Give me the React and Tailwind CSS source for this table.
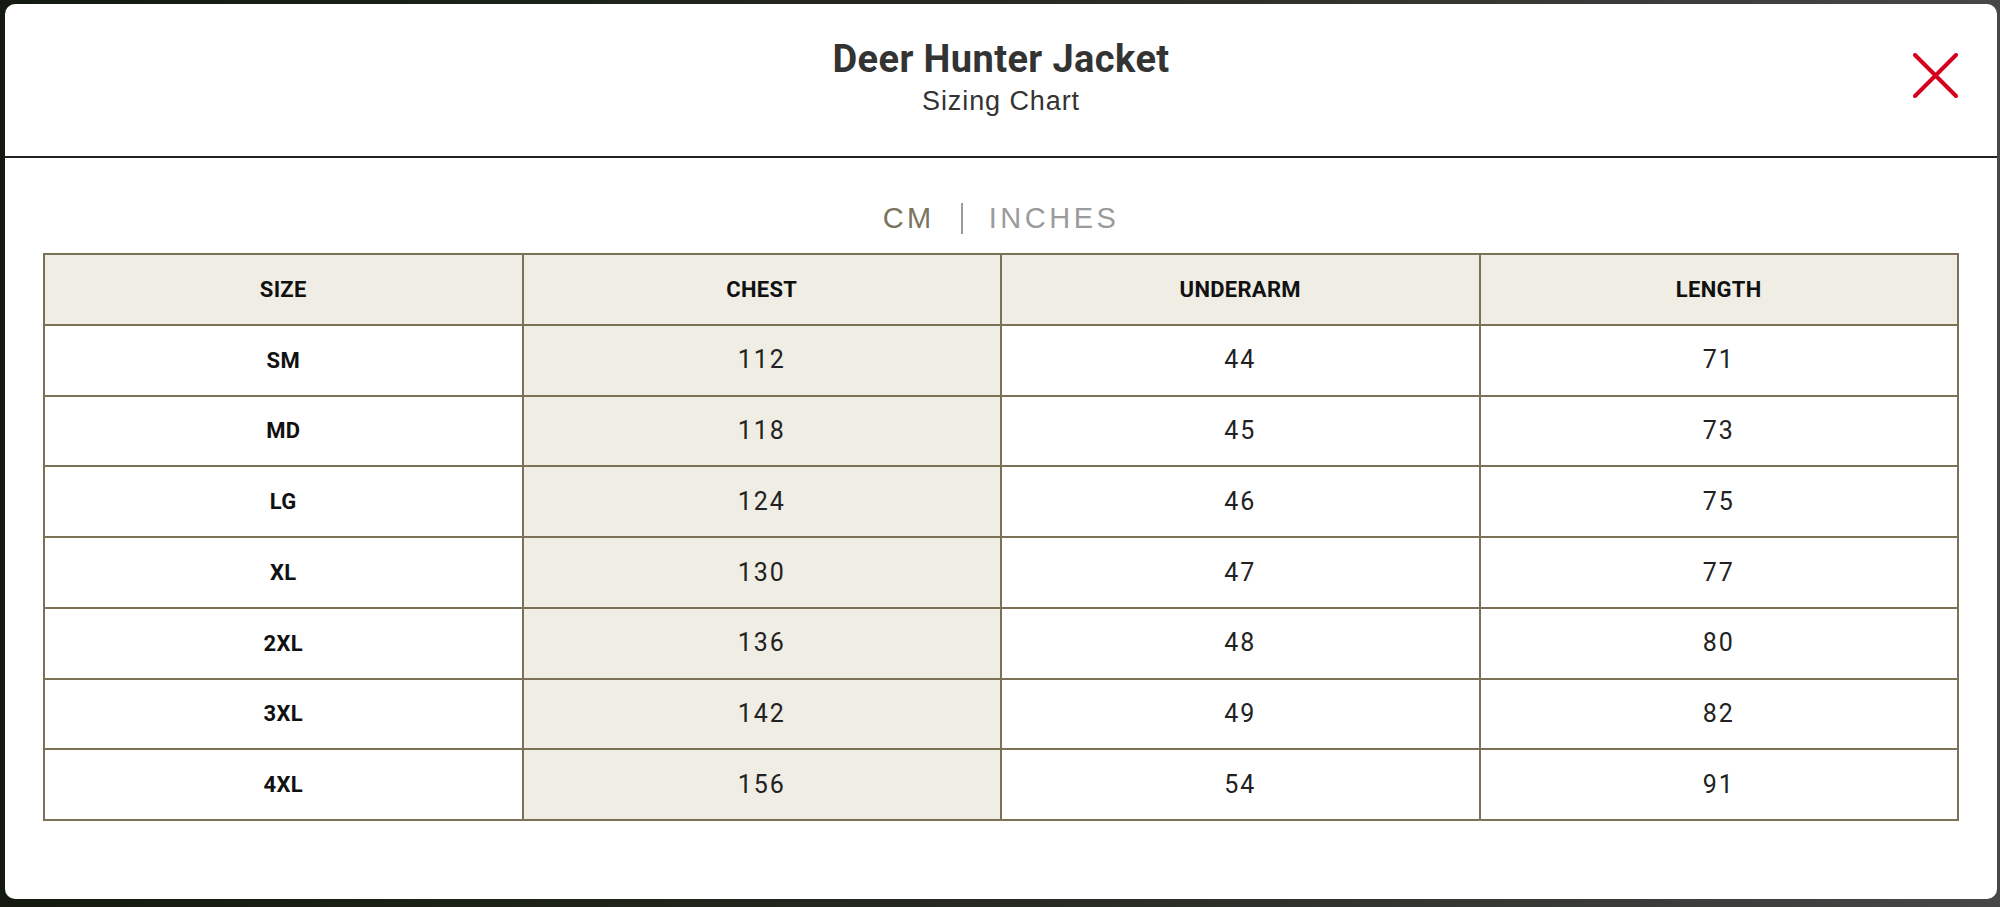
import React from 'react'

const rows = [
  { size: 'SM', chest: 112, underarm: 44, length: 71 },
  { size: 'MD', chest: 118, underarm: 45, length: 73 },
  { size: 'LG', chest: 124, underarm: 46, length: 75 },
  { size: 'XL', chest: 130, underarm: 47, length: 77 },
  { size: '2XL', chest: 136, underarm: 48, length: 80 },
  { size: '3XL', chest: 142, underarm: 49, length: 82 },
  { size: '4XL', chest: 156, underarm: 54, length: 91 },
]

const headers = ['SIZE', 'CHEST', 'UNDERARM', 'LENGTH']

const cond = "font-['Roboto','Liberation_Sans',sans-serif]"
const cell = 'h-[70.75px] flex items-center justify-center border-r-2 border-b-2 border-[#7b7157]'
const head = `${cond} font-bold text-[22px] tracking-[0.3px] text-[#111]`
const num = `${cond} text-[25px] tracking-[2px] text-[#222]`

const App = () => {
  return (
    <div className="w-[2000px] h-[907px] overflow-hidden bg-gradient-to-r from-[#141a10] via-[#262a22] to-[#474747] pt-[4px] pl-[5px] pr-[3px]">
      <div className="relative h-[895px] bg-white rounded-[10px] font-['Liberation_Sans',sans-serif]">
        {/* Header */}
        <div className="h-[152px] flex flex-col items-center pt-[36px] text-[#333]">
          <h1 className={`${cond} font-bold text-[38px] leading-none tracking-[0.4px]`}>Deer Hunter Jacket</h1>
          <p className="mt-[10px] text-[27px] leading-none tracking-[0.9px]">Sizing Chart</p>
        </div>
        <button className="absolute top-[49px] right-[39px] w-[45px] h-[45px]">
          <svg viewBox="0 0 45 45" className="w-full h-full">
            <path d="M2 2 L43 43 M43 2 L2 43" stroke="#d3011c" strokeWidth="4" strokeLinecap="round" fill="none" />
          </svg>
        </button>
        <div className="h-[2px] bg-[#222]" />

        {/* Body */}
        <div className="px-[38px] pt-[46px]">
          <div className="flex items-center justify-center h-[29px] text-[29px] leading-none">
            <span className="text-[#7a7560] tracking-[3.5px]">CM</span>
            <span className="mx-[26px] w-[2px] h-[31px] bg-[#9a9a9a]" />
            <span className="text-[#9b9b9b] tracking-[3.5px]">INCHES</span>
          </div>

          <div className="mt-[20px] grid grid-cols-4 border-l-2 border-t-2 border-[#7b7157]">
            {headers.map((h) => (
              <div key={h} className={`${cell} bg-[#f0ede4] ${head}`}>
                {h}
              </div>
            ))}
            {rows.map((r) => (
              <React.Fragment key={r.size}>
                <div className={`${cell} ${head}`}>{r.size}</div>
                <div className={`${cell} bg-[#f0ede4] ${num}`}>{r.chest}</div>
                <div className={`${cell} ${num}`}>{r.underarm}</div>
                <div className={`${cell} ${num}`}>{r.length}</div>
              </React.Fragment>
            ))}
          </div>
        </div>
      </div>
    </div>
  )
}

export default App
